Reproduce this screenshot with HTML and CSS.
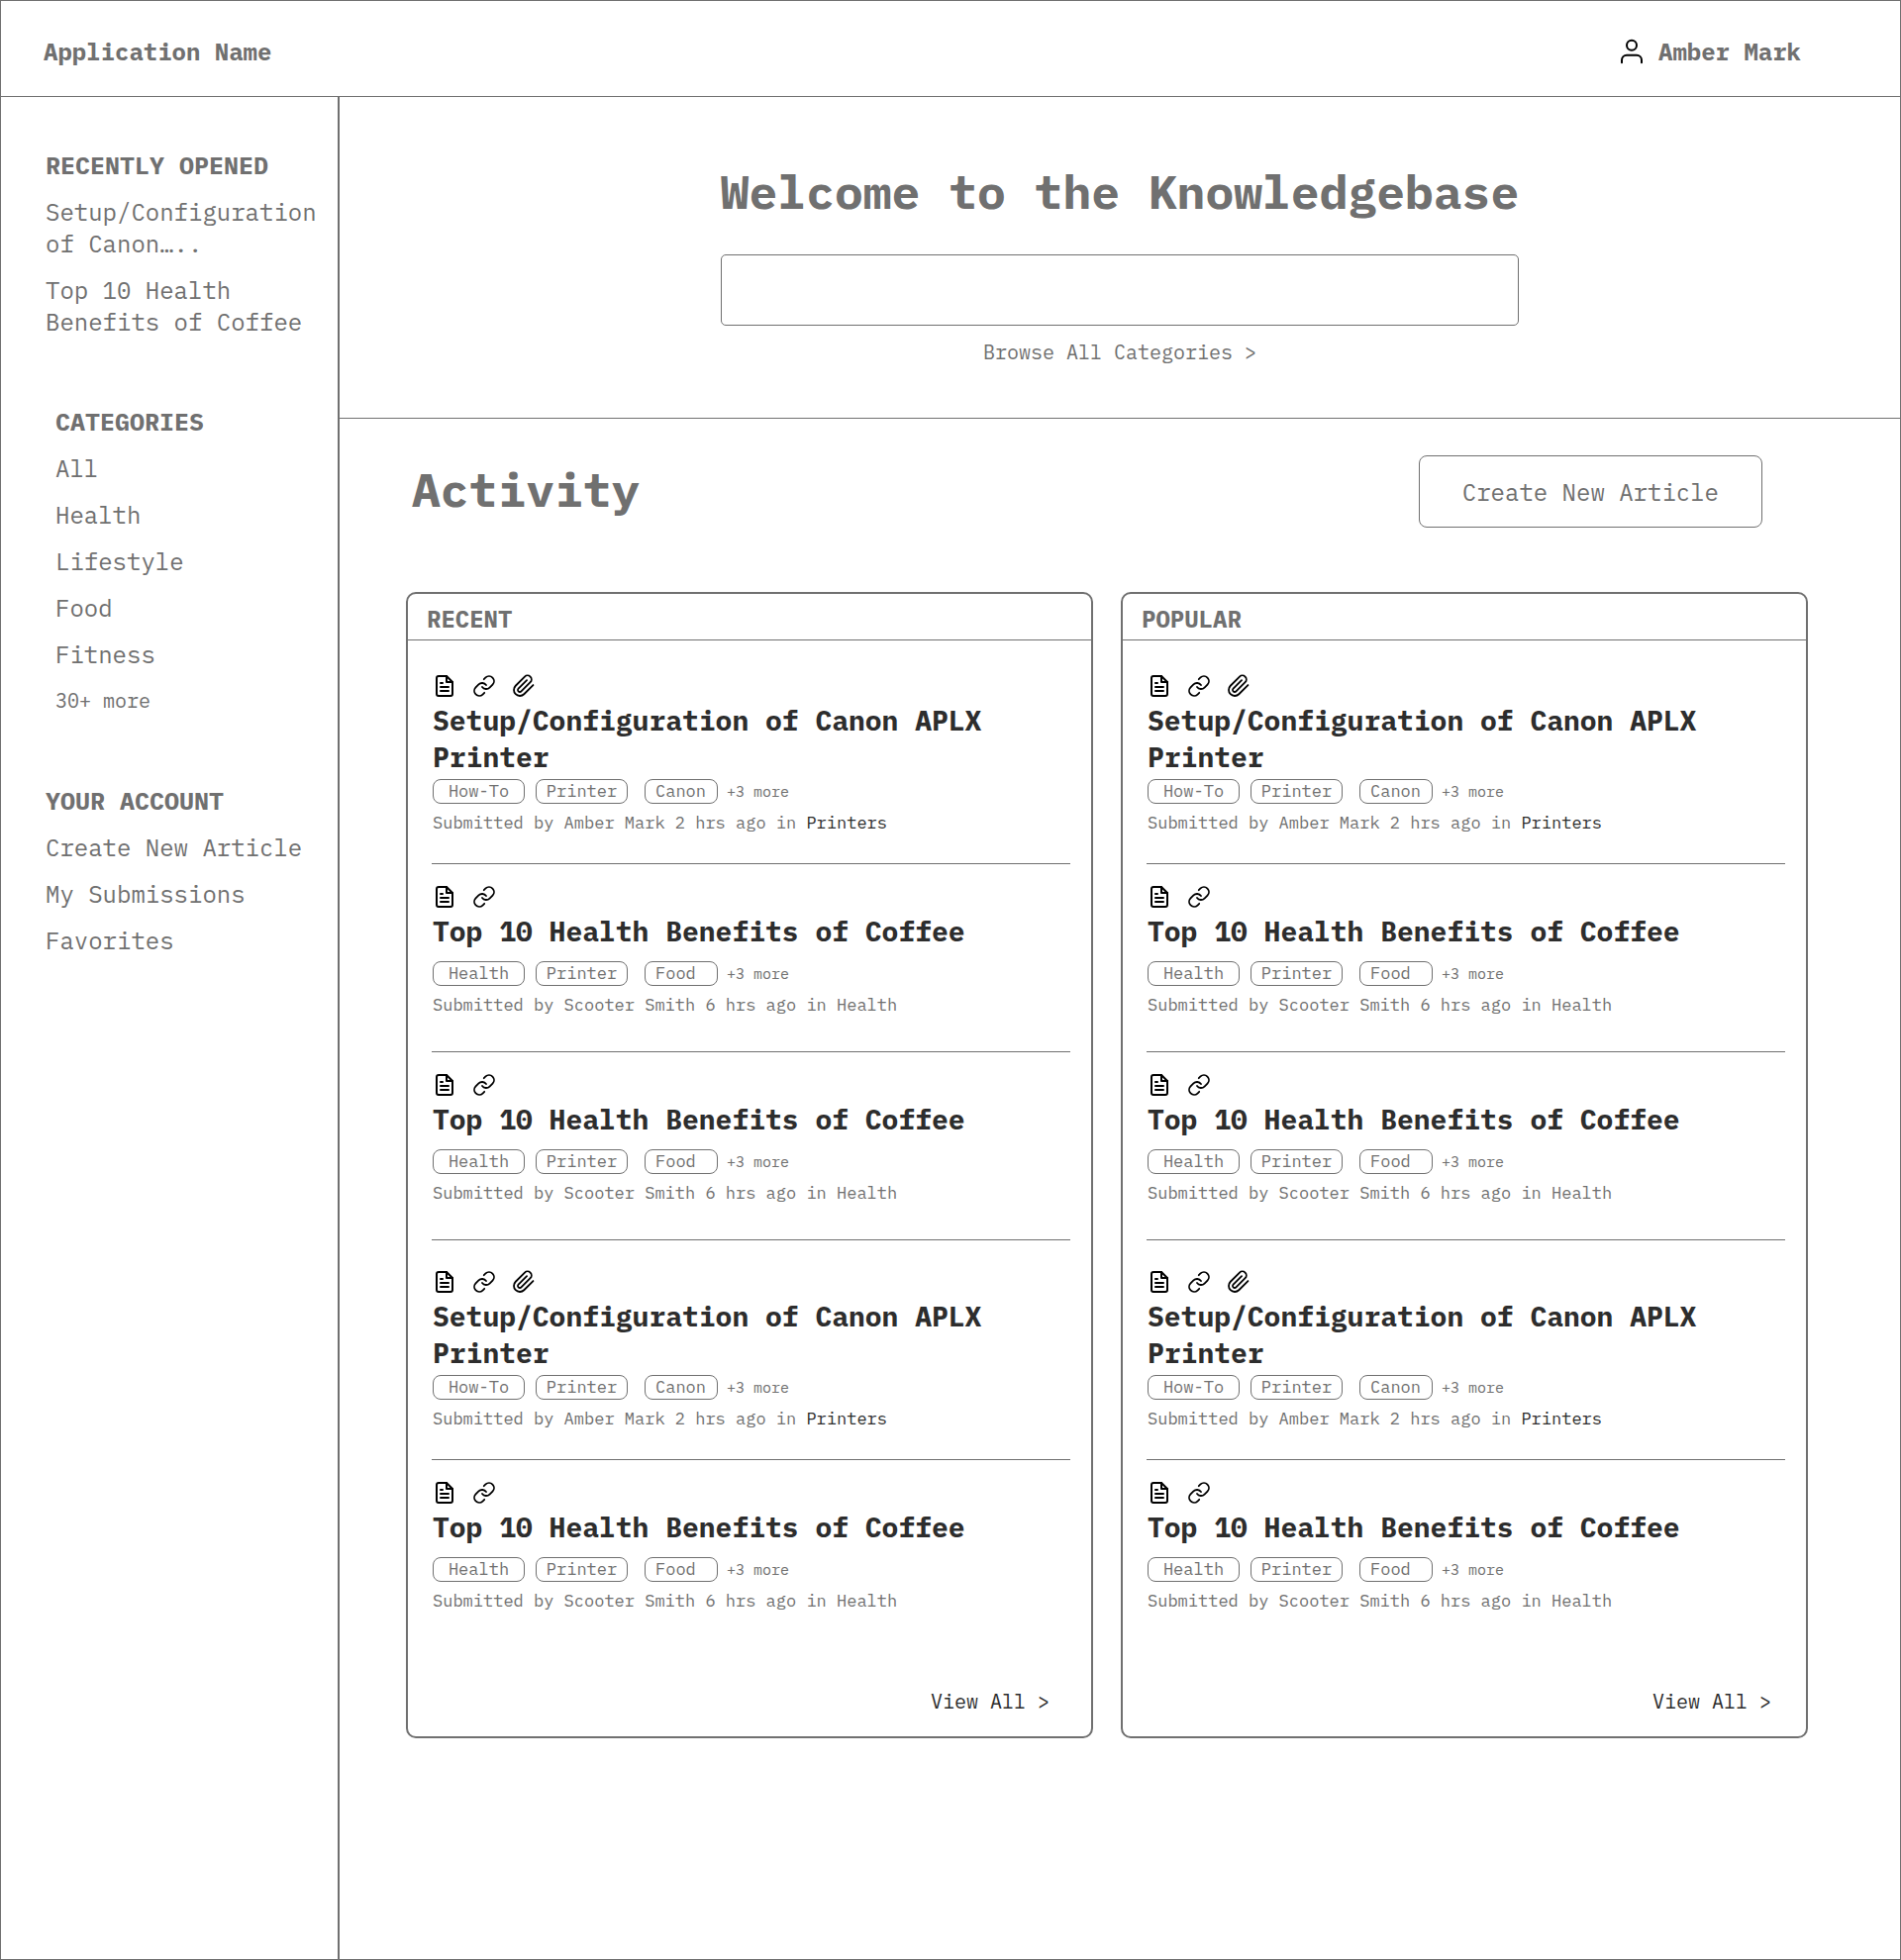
FILE: index.html
```html
<!DOCTYPE html>
<html lang="en">
<head>
<meta charset="utf-8">
<meta name="viewport" content="width=device-width, initial-scale=1">
<title>Knowledgebase</title>
<link rel="stylesheet" href="styles.css">
</head>
<body class="page">
<svg class="sprite" aria-hidden="true">
  <symbol id="i-file" viewBox="0 0 24 24"><path d="M14 2H6a2 2 0 0 0-2 2v16a2 2 0 0 0 2 2h12a2 2 0 0 0 2-2V8z"/><path d="M14 2v6h6"/><path d="M8 9h2M8 13h8M8 17h8"/></symbol>
  <symbol id="i-link" viewBox="0 0 24 24"><path d="M10 13a5 5 0 0 0 7.54.54l3-3a5 5 0 0 0-7.07-7.07l-1.72 1.71"/><path d="M14 11a5 5 0 0 0-7.54-.54l-3 3a5 5 0 0 0 7.07 7.07l1.71-1.71"/></symbol>
  <symbol id="i-clip" viewBox="0 0 24 24"><path d="M21.44 11.05l-9.19 9.19a6 6 0 0 1-8.49-8.49l9.19-9.19a4 4 0 0 1 5.66 5.66l-9.2 9.19a2 2 0 0 1-2.83-2.83l8.49-8.48"/></symbol>
  <symbol id="i-user" viewBox="0 0 24 24"><path d="M20 21v-2a4 4 0 0 0-4-4H8a4 4 0 0 0-4 4v2"/><circle cx="12" cy="7" r="4"/></symbol>
</svg>

<header class="topbar">
  <a href="#">Application Name</a>
  <a class="topbar-user" href="#"><svg class="icon-user" aria-hidden="true"><use href="#i-user"/></svg>Amber Mark</a>
</header>

<div class="body">
  <nav class="sidebar">
    <section class="side-section">
      <h2 class="side-title">RECENTLY OPENED</h2>
      <a href="#">Setup/Configuration of Canon…..</a>
      <a href="#">Top 10 Health Benefits of Coffee</a>
    </section>
    <section class="side-section side-section--inset">
      <h2 class="side-title">CATEGORIES</h2>
      <a href="#">All</a>
      <a href="#">Health</a>
      <a href="#">Lifestyle</a>
      <a href="#">Food</a>
      <a href="#">Fitness</a>
      <a class="side-more" href="#">30+ more</a>
    </section>
    <section class="side-section">
      <h2 class="side-title">YOUR ACCOUNT</h2>
      <a href="#">Create New Article</a>
      <a href="#">My Submissions</a>
      <a href="#">Favorites</a>
    </section>
  </nav>

  <main class="main">
    <section class="hero">
      <h1 class="headline"><label for="search">Welcome to the Knowledgebase</label></h1>
      <input class="search" id="search" type="search">
      <a class="browse" href="#">Browse All Categories &gt;</a>
    </section>

    <section class="activity">
      <div class="activity-head">
        <h2 class="headline">Activity</h2>
        <button class="create" type="button">Create New Article</button>
      </div>

      <div class="cards">
        <section class="card">
          <h3 class="card-head">RECENT</h3>
          <div class="list">
            <article class="article article--long">
              <div class="icons"><svg class="icon"><use href="#i-file"/></svg><svg class="icon icon--thin"><use href="#i-link"/></svg><svg class="icon icon--thin"><use href="#i-clip"/></svg></div>
              <h4 class="title"><a href="#">Setup/Configuration of Canon APLX Printer</a></h4>
              <div class="tags"><a class="tag" href="#">How-To</a><a class="tag" href="#">Printer</a><a class="tag tag--short" href="#">Canon</a><a class="tags-more" href="#">+3 more</a></div>
              <p class="meta">Submitted by Amber Mark 2 hrs ago in <a class="meta-link" href="#">Printers</a></p>
            </article>
            <article class="article">
              <div class="icons"><svg class="icon"><use href="#i-file"/></svg><svg class="icon icon--thin"><use href="#i-link"/></svg></div>
              <h4 class="title"><a href="#">Top 10 Health Benefits of Coffee</a></h4>
              <div class="tags"><a class="tag" href="#">Health</a><a class="tag" href="#">Printer</a><a class="tag tag--short" href="#">Food</a><a class="tags-more" href="#">+3 more</a></div>
              <p class="meta">Submitted by Scooter Smith 6 hrs ago in Health</p>
            </article>
            <article class="article">
              <div class="icons"><svg class="icon"><use href="#i-file"/></svg><svg class="icon icon--thin"><use href="#i-link"/></svg></div>
              <h4 class="title"><a href="#">Top 10 Health Benefits of Coffee</a></h4>
              <div class="tags"><a class="tag" href="#">Health</a><a class="tag" href="#">Printer</a><a class="tag tag--short" href="#">Food</a><a class="tags-more" href="#">+3 more</a></div>
              <p class="meta">Submitted by Scooter Smith 6 hrs ago in Health</p>
            </article>
            <article class="article article--long">
              <div class="icons"><svg class="icon"><use href="#i-file"/></svg><svg class="icon icon--thin"><use href="#i-link"/></svg><svg class="icon icon--thin"><use href="#i-clip"/></svg></div>
              <h4 class="title"><a href="#">Setup/Configuration of Canon APLX Printer</a></h4>
              <div class="tags"><a class="tag" href="#">How-To</a><a class="tag" href="#">Printer</a><a class="tag tag--short" href="#">Canon</a><a class="tags-more" href="#">+3 more</a></div>
              <p class="meta">Submitted by Amber Mark 2 hrs ago in <a class="meta-link" href="#">Printers</a></p>
            </article>
            <article class="article">
              <div class="icons"><svg class="icon"><use href="#i-file"/></svg><svg class="icon icon--thin"><use href="#i-link"/></svg></div>
              <h4 class="title"><a href="#">Top 10 Health Benefits of Coffee</a></h4>
              <div class="tags"><a class="tag" href="#">Health</a><a class="tag" href="#">Printer</a><a class="tag tag--short" href="#">Food</a><a class="tags-more" href="#">+3 more</a></div>
              <p class="meta">Submitted by Scooter Smith 6 hrs ago in Health</p>
            </article>
          </div>
          <div class="card-foot"><a href="#">View All &gt;</a></div>
        </section>

        <section class="card card--popular">
          <h3 class="card-head">POPULAR</h3>
          <div class="list">
            <article class="article article--long">
              <div class="icons"><svg class="icon"><use href="#i-file"/></svg><svg class="icon icon--thin"><use href="#i-link"/></svg><svg class="icon icon--thin"><use href="#i-clip"/></svg></div>
              <h4 class="title"><a href="#">Setup/Configuration of Canon APLX Printer</a></h4>
              <div class="tags"><a class="tag" href="#">How-To</a><a class="tag" href="#">Printer</a><a class="tag tag--short" href="#">Canon</a><a class="tags-more" href="#">+3 more</a></div>
              <p class="meta">Submitted by Amber Mark 2 hrs ago in <a class="meta-link" href="#">Printers</a></p>
            </article>
            <article class="article">
              <div class="icons"><svg class="icon"><use href="#i-file"/></svg><svg class="icon icon--thin"><use href="#i-link"/></svg></div>
              <h4 class="title"><a href="#">Top 10 Health Benefits of Coffee</a></h4>
              <div class="tags"><a class="tag" href="#">Health</a><a class="tag" href="#">Printer</a><a class="tag tag--short" href="#">Food</a><a class="tags-more" href="#">+3 more</a></div>
              <p class="meta">Submitted by Scooter Smith 6 hrs ago in Health</p>
            </article>
            <article class="article">
              <div class="icons"><svg class="icon"><use href="#i-file"/></svg><svg class="icon icon--thin"><use href="#i-link"/></svg></div>
              <h4 class="title"><a href="#">Top 10 Health Benefits of Coffee</a></h4>
              <div class="tags"><a class="tag" href="#">Health</a><a class="tag" href="#">Printer</a><a class="tag tag--short" href="#">Food</a><a class="tags-more" href="#">+3 more</a></div>
              <p class="meta">Submitted by Scooter Smith 6 hrs ago in Health</p>
            </article>
            <article class="article article--long">
              <div class="icons"><svg class="icon"><use href="#i-file"/></svg><svg class="icon icon--thin"><use href="#i-link"/></svg><svg class="icon icon--thin"><use href="#i-clip"/></svg></div>
              <h4 class="title"><a href="#">Setup/Configuration of Canon APLX Printer</a></h4>
              <div class="tags"><a class="tag" href="#">How-To</a><a class="tag" href="#">Printer</a><a class="tag tag--short" href="#">Canon</a><a class="tags-more" href="#">+3 more</a></div>
              <p class="meta">Submitted by Amber Mark 2 hrs ago in <a class="meta-link" href="#">Printers</a></p>
            </article>
            <article class="article">
              <div class="icons"><svg class="icon"><use href="#i-file"/></svg><svg class="icon icon--thin"><use href="#i-link"/></svg></div>
              <h4 class="title"><a href="#">Top 10 Health Benefits of Coffee</a></h4>
              <div class="tags"><a class="tag" href="#">Health</a><a class="tag" href="#">Printer</a><a class="tag tag--short" href="#">Food</a><a class="tags-more" href="#">+3 more</a></div>
              <p class="meta">Submitted by Scooter Smith 6 hrs ago in Health</p>
            </article>
          </div>
          <div class="card-foot"><a href="#">View All &gt;</a></div>
        </section>
      </div>
    </section>
  </main>
</div>
</body>
</html>
```
FILE: styles.css
```css
*, *::before, *::after { box-sizing: border-box; }

:root {
  --line: #707070;
  --text: #707070;
  --dark: #2d2d2d;
}

h1, h2, h3, h4, p { margin: 0; }
a { color: inherit; text-decoration: none; }

.page {
  margin: 0;
  min-height: 100vh;
  display: flex;
  flex-direction: column;
  border: 1px solid var(--line);
  background: #fff;
  color: var(--text);
  font-family: "IBM Plex Mono", "Liberation Mono", monospace;
  font-size: 24px;
  line-height: 32px;
}

.sprite { position: absolute; width: 0; height: 0; }

/* Top bar */
.topbar {
  display: flex;
  justify-content: space-between;
  padding: 35px 100px 29px 43px;
  border-bottom: 1px solid var(--line);
  font-weight: 700;
}
.topbar-user { display: flex; gap: 12px; }
.icon-user {
  width: 30px;
  height: 30px;
  margin-top: 1px;
  fill: none;
  stroke: #000;
  stroke-width: 1.6;
  stroke-linecap: round;
  stroke-linejoin: round;
}

/* Columns */
.body { flex: 1; display: flex; }

.sidebar {
  flex: 0 0 342px;
  display: flex;
  flex-direction: column;
  gap: 69px;
  padding: 53px 12px 53px 45px;
  border-right: 2px solid var(--line);
}
.side-section { display: flex; flex-direction: column; gap: 15px; }
.side-section--inset { padding-left: 10px; }
.side-title { font-size: 25px; font-weight: 700; line-height: 32px; }
.side-more { font-size: 20px; }

.main { flex: 1; min-width: 0; }

/* Search area */
.hero {
  display: flex;
  flex-direction: column;
  align-items: center;
  padding: 61px 40px 53px;
  border-bottom: 1px solid var(--line);
}
.headline { font-size: 48px; font-weight: 700; line-height: 68px; }
.search {
  appearance: none;
  width: 100%;
  max-width: 806px;
  height: 72px;
  margin: 30px 0 14px;
  padding: 0 20px;
  border: 1px solid var(--line);
  border-radius: 5px;
  background: #fff;
  color: inherit;
  font: inherit;
}
.browse { font-size: 20px; line-height: 26px; }

/* Activity */
.activity { padding: 37px 93px 64px 67px; }
.activity-head {
  display: flex;
  justify-content: space-between;
  align-items: flex-start;
  padding: 0 46px 0 6px;
  margin-bottom: 65px;
}
.create {
  padding: 20px 43px 19px;
  border: 1px solid var(--line);
  border-radius: 8px;
  background: #fff;
  color: inherit;
  font: inherit;
}

.cards { display: grid; grid-template-columns: 1fr 1fr; gap: 28px; }
.card { border: 2px solid var(--line); border-radius: 10px; }
.card-head {
  padding: 9px 19px 5px;
  border-bottom: 1px solid var(--line);
  font-size: 24px;
  font-weight: 700;
}
.list { padding: 4px 21px 0 24px; }

.article { padding: 21px 0 36px 1px; }
.article--long { padding: 30px 0 30px 1px; }
.article + .article { border-top: 1px solid var(--line); }

.icons { display: flex; gap: 16px; margin-bottom: 4px; }
.icon {
  width: 24px;
  height: 24px;
  fill: none;
  stroke: #000;
  stroke-width: 2;
  stroke-linecap: round;
  stroke-linejoin: round;
}
.icon--thin { stroke-width: 1.8; }

.title { font-size: 28px; line-height: 37px; font-weight: 700; color: var(--dark); }

.tags { display: flex; gap: 9px; margin: 12px 0 8px; }
.article--long .tags { margin-top: 4px; }
.tag {
  width: 93px;
  border: 1px solid var(--line);
  border-radius: 8px;
  font-size: 17px;
  line-height: 23px;
  text-align: center;
}
.tag + .tag { margin-left: 2px; }
.tag + .tag--short { width: 74px; margin-left: 8px; padding-left: 10px; text-align: left; }
.tags-more { font-size: 15px; line-height: 25px; }

.meta { font-size: 17px; line-height: 22px; }
.meta-link { color: var(--dark); }

.card-foot {
  display: flex;
  justify-content: flex-end;
  padding: 42px 42px 22px;
  color: var(--dark);
  font-size: 20px;
  line-height: 26px;
}
.card--popular .card-foot { padding-right: 35px; }
```
